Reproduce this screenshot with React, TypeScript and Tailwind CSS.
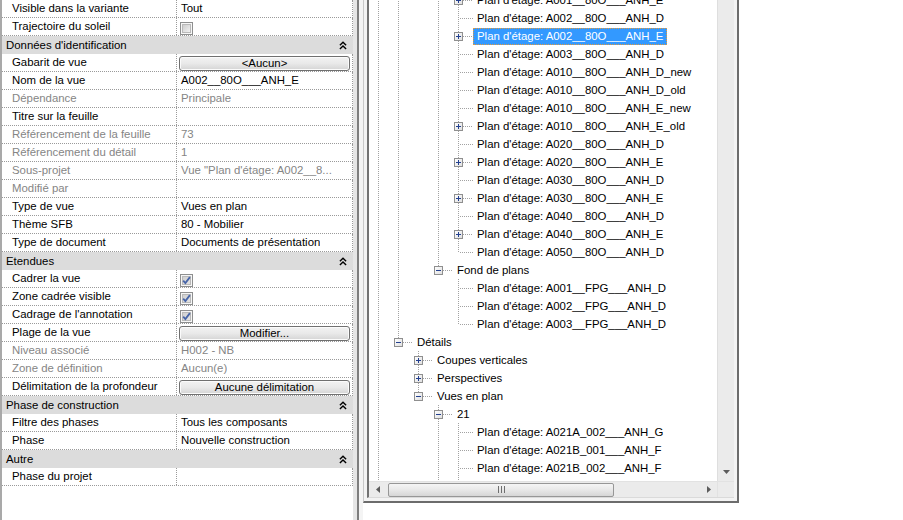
type PropRow =
  | { kind: 'header'; label: string }
  | {
      kind: 'prop';
      label: string;
      value?: string;
      muted?: boolean;
      check?: boolean;
      button?: string;
    };

type TreeRow = {
  text: string;
  level: number;
  guides: number[];
  box?: 'plus' | 'minus';
  last?: boolean;
  selected?: boolean;
};

const properties: PropRow[] = [
  { kind: 'prop', label: 'Visible dans la variante', value: 'Tout' },
  { kind: 'prop', label: 'Trajectoire du soleil', check: false },
  { kind: 'header', label: "Données d'identification" },
  { kind: 'prop', label: 'Gabarit de vue', button: '<Aucun>' },
  { kind: 'prop', label: 'Nom de la vue', value: 'A002__80O___ANH_E' },
  { kind: 'prop', label: 'Dépendance', value: 'Principale', muted: true },
  { kind: 'prop', label: 'Titre sur la feuille' },
  { kind: 'prop', label: 'Référencement de la feuille', value: '73', muted: true },
  { kind: 'prop', label: 'Référencement du détail', value: '1', muted: true },
  { kind: 'prop', label: 'Sous-projet', value: 'Vue "Plan d\'étage: A002__8...', muted: true },
  { kind: 'prop', label: 'Modifié par', muted: true },
  { kind: 'prop', label: 'Type de vue', value: 'Vues en plan' },
  { kind: 'prop', label: 'Thème SFB', value: '80 - Mobilier' },
  { kind: 'prop', label: 'Type de document', value: 'Documents de présentation' },
  { kind: 'header', label: 'Etendues' },
  { kind: 'prop', label: 'Cadrer la vue', check: true },
  { kind: 'prop', label: 'Zone cadrée visible', check: true },
  { kind: 'prop', label: "Cadrage de l'annotation", check: true },
  { kind: 'prop', label: 'Plage de la vue', button: 'Modifier...' },
  { kind: 'prop', label: 'Niveau associé', value: 'H002 - NB', muted: true },
  { kind: 'prop', label: 'Zone de définition', value: 'Aucun(e)', muted: true },
  { kind: 'prop', label: 'Délimitation de la profondeur', button: 'Aucune délimitation' },
  { kind: 'header', label: 'Phase de construction' },
  { kind: 'prop', label: 'Filtre des phases', value: 'Tous les composants' },
  { kind: 'prop', label: 'Phase', value: 'Nouvelle construction' },
  { kind: 'header', label: 'Autre' },
  { kind: 'prop', label: 'Phase du projet' },
];

// guide x positions are local to the tree pane (pane starts at page x 369)
const upper = [9, 29, 69];
const plan80 = (code: string, suffix: string, box?: 'plus'): TreeRow => ({
  text: `Plan d'étage: ${code}__80O___ANH_${suffix}`,
  level: 3,
  guides: upper,
  box,
});

const tree: TreeRow[] = [
  plan80('A001', 'E', 'plus'),
  plan80('A002', 'D'),
  { ...plan80('A002', 'E', 'plus'), selected: true },
  plan80('A003', 'D'),
  plan80('A010', 'D_new'),
  plan80('A010', 'D_old'),
  plan80('A010', 'E_new'),
  plan80('A010', 'E_old', 'plus'),
  plan80('A020', 'D'),
  plan80('A020', 'E', 'plus'),
  plan80('A030', 'D'),
  plan80('A030', 'E', 'plus'),
  plan80('A040', 'D'),
  plan80('A040', 'E', 'plus'),
  { ...plan80('A050', 'D'), last: true },
  { text: 'Fond de plans', level: 2, guides: [9, 29], box: 'minus', last: true },
  { text: "Plan d'étage: A001__FPG___ANH_D", level: 3, guides: [9, 29] },
  { text: "Plan d'étage: A002__FPG___ANH_D", level: 3, guides: [9, 29] },
  { text: "Plan d'étage: A003__FPG___ANH_D", level: 3, guides: [9, 29], last: true },
  { text: 'Détails', level: 0, guides: [9], box: 'minus', last: true },
  { text: 'Coupes verticales', level: 1, guides: [9], box: 'plus' },
  { text: 'Perspectives', level: 1, guides: [9], box: 'plus' },
  { text: 'Vues en plan', level: 1, guides: [9], box: 'minus', last: true },
  { text: '21', level: 2, guides: [9], box: 'minus' },
  { text: "Plan d'étage: A021A_002___ANH_G", level: 3, guides: [9, 69] },
  { text: "Plan d'étage: A021B_001___ANH_F", level: 3, guides: [9, 69] },
  { text: "Plan d'étage: A021B_002___ANH_F", level: 3, guides: [9, 69] },
  { text: '', level: 3, guides: [9, 69] },
];

function CollapseIcon() {
  return (
    <svg width="8" height="9" viewBox="0 0 8 9" className="shrink-0">
      <path
        d="M0.9 4.3 L4 1.2 L7.1 4.3 M0.9 8.1 L4 5 L7.1 8.1"
        fill="none"
        stroke="#000"
        strokeWidth="1.4"
      />
    </svg>
  );
}

function CheckBox({ checked }: { checked: boolean }) {
  const id = checked ? 'cb-on' : 'cb-off';
  return (
    <svg width="13" height="13" viewBox="0 0 13 13" className="ml-[3px] mt-[4px] shrink-0">
      <defs>
        <linearGradient id={id} x1="0" y1="0" x2="1" y2="1">
          <stop offset="0" stopColor={checked ? '#cfcfcf' : '#cbcbcb'} />
          <stop offset="1" stopColor={checked ? '#e4e4e4' : '#f4f4f4'} />
        </linearGradient>
      </defs>
      <rect x="0.5" y="0.5" width="12" height="12" fill="#f6f6f6" stroke="#8e8f8f" />
      <rect x="2.5" y="2.5" width="8" height="8" fill={`url(#${id})`} stroke="#b9b9b9" />
      {checked ? (
        <path d="M3.2 6.6 L5.4 9.1 L9.9 3.1" fill="none" stroke="#4765a8" strokeWidth="1.8" />
      ) : null}
    </svg>
  );
}

function CellButton({ label }: { label: string }) {
  return (
    <div className="ml-[2px] mt-[2px] flex h-[15px] w-[171px] items-center justify-center rounded-[3px] border border-[#707070] bg-gradient-to-b from-[#f3f3f3] via-[#e9e9e9] to-[#d4d4d4] leading-none text-black shadow-[inset_0_0_0_1px_#fbfbfb]">
      {label}
    </div>
  );
}

function PropertyRow({ row }: { row: PropRow }) {
  if (row.kind === 'header') {
    return (
      <div className="flex h-[18px] items-center justify-between bg-[#dcdcdc] pl-[4px] pr-[6px] pt-[1px] text-black">
        <span className="leading-[17px]">{row.label}</span>
        <CollapseIcon />
      </div>
    );
  }

  const tone = row.muted ? 'text-[#858585]' : 'text-black';

  return (
    <div className="flex h-[18px] border-b border-r border-dotted border-[#9a9a9a]">
      <div
        className={`w-[175px] shrink-0 overflow-hidden whitespace-nowrap border-r border-dotted border-[#9a9a9a] pl-[10px] leading-[17px] ${tone}`}
      >
        {row.label}
      </div>
      <div className="flex min-w-0 flex-1 items-start">
        {row.button ? (
          <CellButton label={row.button} />
        ) : row.check !== undefined ? (
          <CheckBox checked={row.check} />
        ) : (
          <span className={`overflow-hidden whitespace-nowrap pl-[4px] leading-[17px] ${tone}`}>
            {row.value}
          </span>
        )}
      </div>
    </div>
  );
}

function TreeGuides({ row }: { row: TreeRow }) {
  const cx = 29 + row.level * 20;
  const w = cx + 15;
  const dot = { stroke: '#a2a2a2', strokeWidth: 1, strokeDasharray: '1 1' };
  const x = cx + 0.5;

  return (
    <svg width={w} height={18} viewBox={`0 0 ${w} 18`} className="shrink-0">
      {row.guides.map((g) => (
        <line key={g} x1={g + 0.5} y1={0} x2={g + 0.5} y2={18} {...dot} />
      ))}
      {row.box ? (
        <>
          <line x1={x} y1={0} x2={x} y2={5} {...dot} />
          {!row.last ? <line x1={x} y1={14} x2={x} y2={18} {...dot} /> : null}
          <line x1={cx + 5} y1={9.5} x2={w} y2={9.5} {...dot} />
          <defs>
            <linearGradient id="tvbox" x1="0" y1="0" x2="1" y2="1">
              <stop offset="0" stopColor="#ffffff" />
              <stop offset="1" stopColor="#dedede" />
            </linearGradient>
          </defs>
          <rect x={cx - 3.5} y={5.5} width={8} height={8} fill="url(#tvbox)" stroke="#8f8f8f" />
          <line x1={cx - 2} y1={9.5} x2={cx + 3} y2={9.5} stroke="#23408f" />
          {row.box === 'plus' ? (
            <line x1={x} y1={7} x2={x} y2={12} stroke="#23408f" />
          ) : null}
        </>
      ) : (
        <>
          <line x1={x} y1={0} x2={x} y2={row.last ? 10 : 18} {...dot} />
          <line x1={cx + 2} y1={9.5} x2={w} y2={9.5} {...dot} />
        </>
      )}
    </svg>
  );
}

function TreeItem({ row }: { row: TreeRow }) {
  return (
    <div className="flex h-[18px] items-start whitespace-nowrap">
      <TreeGuides row={row} />
      {row.text ? (
        row.selected ? (
          <span className="mt-[1px] h-[17px] border border-dotted border-[#e39a3c] bg-[#3399ff] px-[3px] leading-[15px] text-white">
            {row.text}
          </span>
        ) : (
          <span className="mt-[1px] h-[17px] border border-transparent px-[3px] leading-[15px] text-black">
            {row.text}
          </span>
        )
      ) : null}
    </div>
  );
}

function ArrowLeft() {
  return (
    <svg width="4" height="7" viewBox="0 0 4 7">
      <path d="M4 0 L0 3.5 L4 7 Z" fill="#5c5c5c" />
    </svg>
  );
}

function ArrowRight() {
  return (
    <svg width="4" height="7" viewBox="0 0 4 7">
      <path d="M0 0 L4 3.5 L0 7 Z" fill="#5c5c5c" />
    </svg>
  );
}

function ArrowDown() {
  return (
    <svg width="7" height="4" viewBox="0 0 7 4">
      <path d="M0 0 L7 0 L3.5 4 Z" fill="#5c5c5c" />
    </svg>
  );
}

function Grip() {
  return (
    <svg width="7" height="7" viewBox="0 0 7 7">
      <path d="M0.5 0 V7 M3.5 0 V7 M6.5 0 V7" stroke="#6e6e6e" />
    </svg>
  );
}

export default function App() {
  return (
    <div className="flex h-[520px] w-[903px] overflow-hidden bg-white font-['Liberation_Sans',Arial,sans-serif] text-[11.4px] text-black">
      <div className="h-full w-[353px] shrink-0 border-l-2 border-[#a9a9a9]">
        {properties.map((row, i) => (
          <PropertyRow key={i} row={row} />
        ))}
      </div>

      <div className="h-full w-[4px] shrink-0 bg-[#e6e6e6]" />
      <div className="h-full w-[2px] shrink-0 bg-[#7e7e7e]" />
      <div className="h-full w-[4px] shrink-0 bg-[#f4f4f4]" />

      <div className="flex h-full w-[376px] shrink-0 flex-col">
        <div className="h-[503px] border-b-2 border-l border-r-2 border-b-[#6c6c6c] border-l-[#c9c9c9] border-r-[#6c6c6c] bg-[#f3f3f3] pb-[3px] pl-[3px] pr-[3px]">
          <div className="flex h-full flex-col border-b border-l-2 border-b-[#dadada] border-l-[#727272]">
            <div className="flex h-[481px]">
              <div className="h-full w-[348px] overflow-hidden bg-white">
                <div className="-mt-[9px]">
                  {tree.map((row, i) => (
                    <TreeItem key={i} row={row} />
                  ))}
                </div>
              </div>
              <div className="flex h-full w-[17px] flex-col justify-end border-l border-[#dedede] bg-[#ebebeb]">
                <div className="flex h-[17px] items-center justify-center pb-[1px]">
                  <ArrowDown />
                </div>
              </div>
            </div>
            <div className="flex h-[16px]">
              <div className="flex w-[348px] items-center border-t border-[#e2e2e2] bg-[#ebebeb]">
                <div className="flex w-[17px] justify-center">
                  <ArrowLeft />
                </div>
                <div className="ml-[2px] flex h-[14px] w-[226px] items-center justify-center rounded-[2px] border border-[#979797] bg-gradient-to-b from-[#f5f5f5] via-[#e8e8e8] to-[#d6d6d6]">
                  <Grip />
                </div>
                <div className="flex-1" />
                <div className="flex w-[17px] justify-center">
                  <ArrowRight />
                </div>
              </div>
              <div className="w-[17px] border-l border-t border-[#e2e2e2] bg-[#ebebeb]" />
            </div>
          </div>
        </div>
      </div>
    </div>
  );
}
